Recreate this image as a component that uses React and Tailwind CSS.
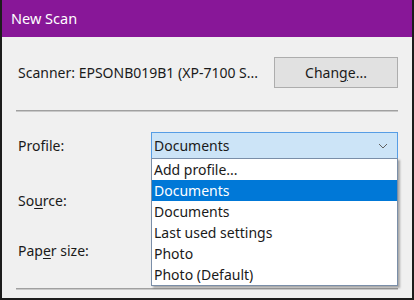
import React from 'react';

const font = { fontFamily: '"Noto Sans", "Open Sans", sans-serif' };

const profiles = ['Add profile...', 'Documents', 'Documents', 'Last used settings', 'Photo', 'Photo (Default)'];

function Chevron() {
  return (
    <svg width="10" height="6" viewBox="0 0 10 6" className="text-[#606060]">
      <path d="M1 1 L5 5 L9 1" fill="none" stroke="currentColor" strokeWidth="1" />
    </svg>
  );
}

export default function App() {
  return (
    <div
      className="w-[414px] h-[300px] overflow-hidden bg-[#f0f0f0] border-l-2 border-r-2 border-b-2 border-[#1c1c1c] flex flex-col text-[14px] text-[#1a1a1a] whitespace-nowrap"
      style={font}
    >
      {/* title bar */}
      <div className="h-[37px] shrink-0 bg-[#881798] text-white flex items-center pl-[9px] text-[14.5px]">
        New Scan
      </div>

      <div className="flex flex-col px-[14px]">
        {/* scanner row */}
        <div className="mt-[20px] h-[31px] flex items-center justify-between">
          <span className="pl-[2px]">Scanner: EPSONB019B1 (XP-7100 S...</span>
          <button className="w-[124px] h-[31px] bg-[#e1e1e1] border border-[#adadad] text-[14px]">
            Chan<span className="underline underline-offset-2">g</span>e...
          </button>
        </div>

        <div className="mt-[22px] h-[2px] bg-[#a0a0a0] border-b border-[#c8c8c8]" />

        {/* profile row */}
        <div className="mt-[20px] h-[27px] flex items-center">
          <span className="w-[135px] pl-[2px]">
            Prof<span className="underline underline-offset-2">i</span>le:
          </span>
          <div className="relative flex-1 h-[27px] z-10">
            <div className="h-full bg-[#cce4f7] border border-[#569de5] flex items-center justify-between pl-[2px] pr-[9px]">
              <span>Documents</span>
              <Chevron />
            </div>
            <div className="absolute left-0 right-0 top-[26px] bg-white border border-[#7a8ea8] shadow-[2px_2px_2px_rgba(0,0,0,0.3)]">
              {profiles.map((p, i) => (
                <div
                  key={i}
                  className={`h-[21px] flex items-center pl-[2px] ${i === 1 ? 'bg-[#0078d7] text-white' : ''}`}
                >
                  {p}
                </div>
              ))}
            </div>
          </div>
        </div>

        {/* source row */}
        <div className="mt-[28px] h-[27px] flex items-center pl-[2px]">
          So<span className="underline underline-offset-2">u</span>rce:
        </div>

        {/* paper size row */}
        <div className="mt-[23px] h-[27px] flex items-center pl-[2px]">
          Pap<span className="underline underline-offset-2">e</span>r size:
        </div>

        <div className="mt-[24px] h-[2px] bg-[#a0a0a0] border-b border-[#c8c8c8]" />
      </div>
    </div>
  );
}
